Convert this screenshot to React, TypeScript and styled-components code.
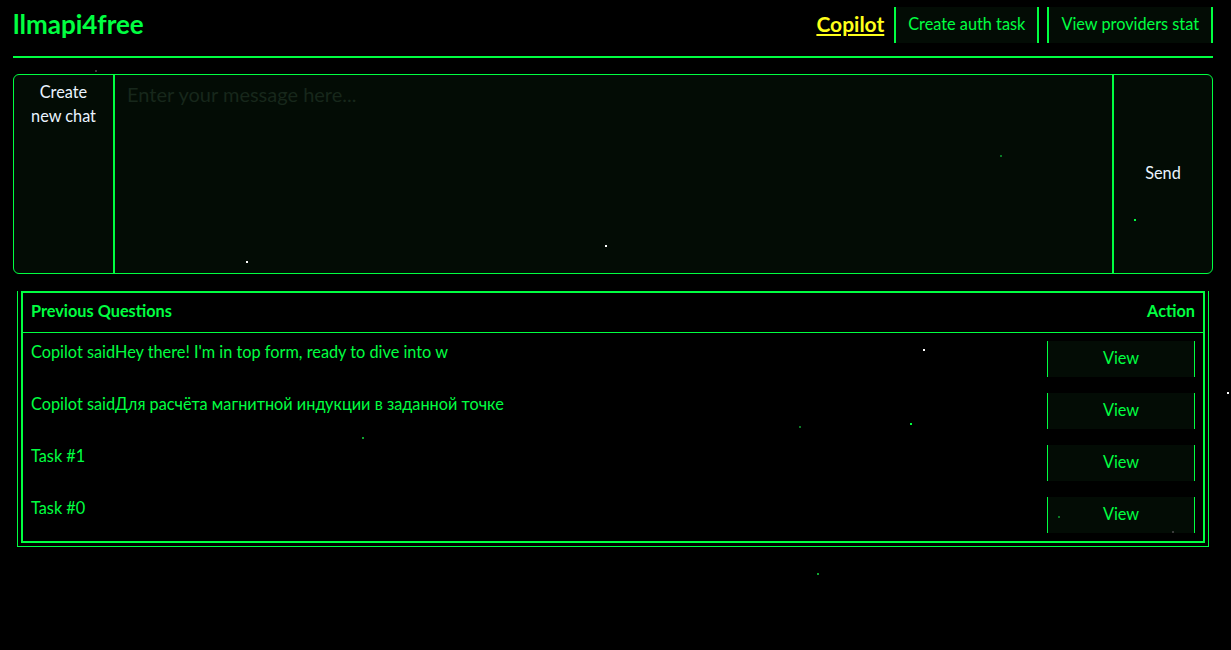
import styled, { createGlobalStyle } from 'styled-components';

const GREEN = '#00ff41';
const DARK = '#030c05';

const GlobalStyle = createGlobalStyle`
  html, body {
    margin: 0;
    background: #000;
    font-family: Lato, "Noto Sans", sans-serif;
    color: ${GREEN};
  }
`;

const Page = styled.div`
  position: relative;
  width: 1200px;
  padding-left: 13px;
  min-height: 650px;
`;

const Header = styled.header`
  display: flex;
  align-items: center;
  justify-content: space-between;
  padding: 7px 0 13px;
  border-bottom: 2px solid ${GREEN};
`;

const Logo = styled.h1`
  margin: 0 0 3px;
  font-size: 26px;
  font-weight: 700;
  color: ${GREEN};
`;

const Nav = styled.nav`
  display: flex;
  align-items: center;
  gap: 8px;
`;

const ActiveLink = styled.a`
  margin: 0 2px 4px 0;
  font-size: 21px;
  font-weight: 700;
  color: #ffff1a;
  text-decoration: underline;
  cursor: pointer;
`;

const NavButton = styled.button`
  height: 36px;
  padding: 0 12px 3px;
  background: ${DARK};
  border: none;
  border-left: 2px solid ${GREEN};
  border-right: 2px solid ${GREEN};
  color: ${GREEN};
  font: inherit;
  font-size: 16.3px;
  cursor: pointer;
`;

const ChatBox = styled.section`
  display: grid;
  grid-template-columns: 99px 1fr 98px;
  height: 198px;
  margin-top: 16px;
  border: 1px solid ${GREEN};
  border-radius: 6px;
  background: ${DARK};
  overflow: hidden;
`;

const SideButton = styled.button<{ $center?: boolean }>`
  display: flex;
  align-items: ${(p) => (p.$center ? 'center' : 'flex-start')};
  justify-content: center;
  padding: ${(p) => (p.$center ? '4px 14px 6px' : '5px 14px 4px')};
  background: transparent;
  border: none;
  color: #eaf4ff;
  font: inherit;
  font-size: 16.3px;
  line-height: 24px;
  text-align: center;
  cursor: pointer;
`;

const MessageInput = styled.textarea`
  box-sizing: border-box;
  height: 100%;
  padding: 7px 12px;
  background: transparent;
  border: none;
  border-left: 2px solid ${GREEN};
  border-right: 2px solid ${GREEN};
  color: #eaf4ff;
  font: inherit;
  font-size: 20px;
  resize: none;
  outline: none;

  &::placeholder {
    color: #17271b;
  }
`;

const TableFrame = styled.div`
  margin: 17px 4px 0;
  padding: 0 3px 3px;
  border: 1px solid ${GREEN};
  border-top: none;
`;

const Table = styled.table`
  width: 100%;
  border-collapse: collapse;
  border: 2px solid ${GREEN};
`;

const HeadCell = styled.th<{ $right?: boolean }>`
  height: 40px;
  box-sizing: border-box;
  padding: 6px 8px 10px;
  font-size: 16.3px;
  font-weight: 700;
  text-align: ${(p) => (p.$right ? 'right' : 'left')};
  border-bottom: 1px solid ${GREEN};
`;

const Cell = styled.td<{ $action?: boolean }>`
  padding: 8px;
  vertical-align: top;
  font-size: 16.3px;
  line-height: 22px;
  width: ${(p) => (p.$action ? '148px' : 'auto')};
`;

const ViewButton = styled.button`
  display: block;
  width: 148px;
  height: 36px;
  padding: 0 0 2px;
  background: ${DARK};
  border: none;
  border-left: 1px solid ${GREEN};
  border-right: 1px solid ${GREEN};
  color: ${GREEN};
  font: inherit;
  font-size: 16.3px;
  cursor: pointer;
`;

const Dot = styled.span<{ $color: string }>`
  position: absolute;
  width: 2px;
  height: 2px;
  background: ${(p) => p.$color};
  pointer-events: none;
`;

const questions = [
  "Copilot saidHey there! I'm in top form, ready to dive into w",
  'Copilot saidДля расчёта магнитной индукции в заданной точке',
  'Task #1',
  'Task #0',
];

const dots: [number, number, string][] = [
  [95, 70, '#3a3a3a'],
  [246, 261, '#ffffff'],
  [605, 245, '#ffffff'],
  [1000, 155, '#0a7a25'],
  [1134, 219, GREEN],
  [923, 349, '#ffffff'],
  [1227, 392, '#ffffff'],
  [362, 437, '#0fa530'],
  [799, 426, '#0a7a25'],
  [910, 423, GREEN],
  [1058, 516, '#0a7a25'],
  [1172, 531, '#3a3a3a'],
  [817, 573, '#0fa530'],
];

export default function App() {
  return (
    <>
      <GlobalStyle />
      <Page>
        <Header>
          <Logo>llmapi4free</Logo>
          <Nav>
            <ActiveLink>Copilot</ActiveLink>
            <NavButton>Create auth task</NavButton>
            <NavButton>View providers stat</NavButton>
          </Nav>
        </Header>

        <ChatBox>
          <SideButton>Create new chat</SideButton>
          <MessageInput placeholder="Enter your message here..." />
          <SideButton $center>Send</SideButton>
        </ChatBox>

        <TableFrame>
          <Table>
            <thead>
              <tr>
                <HeadCell>Previous Questions</HeadCell>
                <HeadCell $right>Action</HeadCell>
              </tr>
            </thead>
            <tbody>
              {questions.map((q) => (
                <tr key={q}>
                  <Cell>{q}</Cell>
                  <Cell $action>
                    <ViewButton>View</ViewButton>
                  </Cell>
                </tr>
              ))}
            </tbody>
          </Table>
        </TableFrame>
      </Page>
      {dots.map(([x, y, c]) => (
        <Dot key={`${x}-${y}`} $color={c} style={{ left: x, top: y }} />
      ))}
    </>
  );
}
